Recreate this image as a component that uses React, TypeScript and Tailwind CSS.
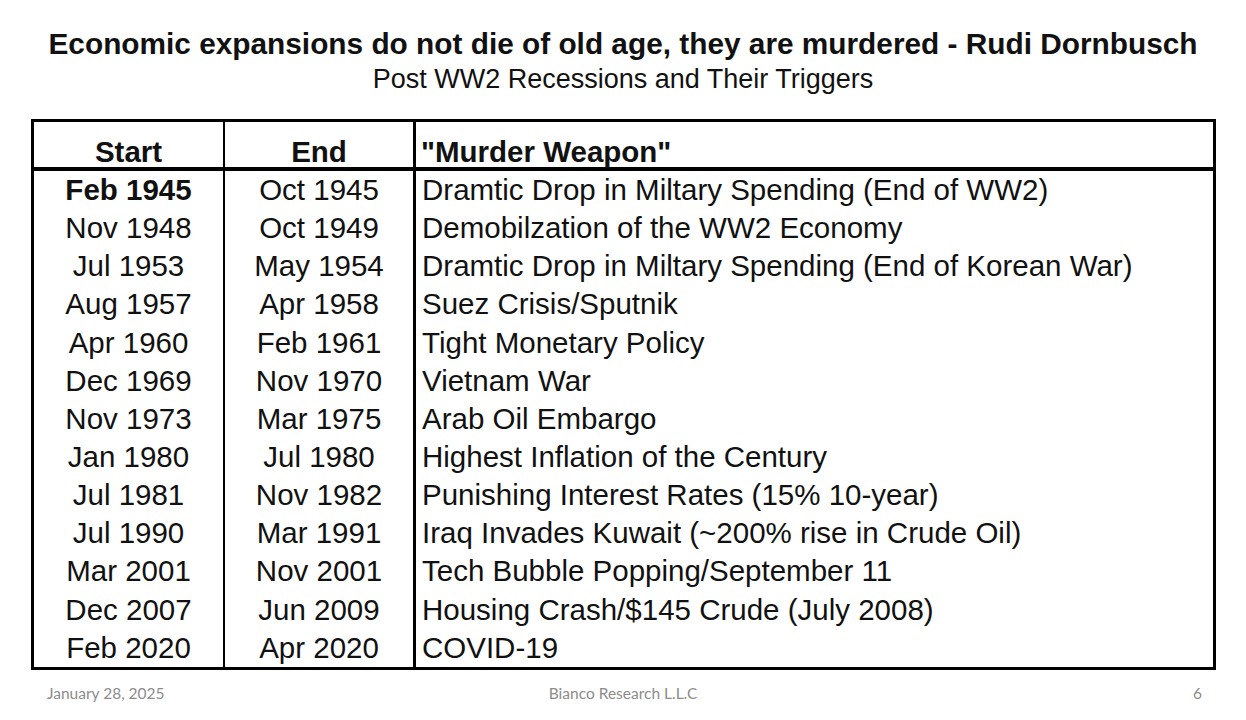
import React from 'react';

const rows: [string, string, string][] = [
  ['Feb 1945', 'Oct 1945', 'Dramtic Drop in Miltary Spending (End of WW2)'],
  ['Nov 1948', 'Oct 1949', 'Demobilzation of the WW2 Economy'],
  ['Jul 1953', 'May 1954', 'Dramtic Drop in Miltary Spending (End of Korean War)'],
  ['Aug 1957', 'Apr 1958', 'Suez Crisis/Sputnik'],
  ['Apr 1960', 'Feb 1961', 'Tight Monetary Policy'],
  ['Dec 1969', 'Nov 1970', 'Vietnam War'],
  ['Nov 1973', 'Mar 1975', 'Arab Oil Embargo'],
  ['Jan 1980', 'Jul 1980', 'Highest Inflation of the Century'],
  ['Jul 1981', 'Nov 1982', 'Punishing Interest Rates (15% 10-year)'],
  ['Jul 1990', 'Mar 1991', 'Iraq Invades Kuwait (~200% rise in Crude Oil)'],
  ['Mar 2001', 'Nov 2001', 'Tech Bubble Popping/September 11'],
  ['Dec 2007', 'Jun 2009', 'Housing Crash/$145 Crude (July 2008)'],
  ['Feb 2020', 'Apr 2020', 'COVID-19'],
];

export default function App() {
  return (
    <div className="w-[1246px] h-[720px] bg-white text-[#111] flex flex-col font-['Liberation_Sans',Arial,sans-serif]">
      <div className="pt-[26px] text-center font-bold text-[29.8px] leading-[36px]">
        Economic expansions do not die of old age, they are murdered - Rudi Dornbusch
      </div>
      <div className="text-center text-[27px] leading-[30px] mt-[2px]">Post WW2 Recessions and Their Triggers</div>

      <div className="ml-[31px] mt-[25px] w-[1185px] border-[3px] border-black">
        <div className="grid grid-cols-[191px_191px_1fr] h-[49px] border-b-[4px] border-black font-bold text-[29.5px] leading-[30px]">
          <div className="flex items-end justify-center border-r-[2px] border-black">Start</div>
          <div className="flex items-end justify-center border-r-[3px] border-black">End</div>
          <div className="flex items-end pl-[5px]">"Murder Weapon"</div>
        </div>
        {rows.map((r, i) => (
          <div key={i} className="grid grid-cols-[191px_191px_1fr] h-[38.15px] text-[29.5px] leading-[38px]">
            <div className={`text-center border-r-[2px] border-black ${i === 0 ? 'font-bold' : ''}`}>{r[0]}</div>
            <div className="text-center border-r-[3px] border-black">{r[1]}</div>
            <div className="pl-[6px] whitespace-nowrap">{r[2]}</div>
          </div>
        ))}
      </div>

      <div className="relative mt-[12px] h-[20px] text-[15.5px] text-[#8c8c8c] font-['Lato',sans-serif]">
        <span className="absolute left-[47px]">January 28, 2025</span>
        <span className="absolute left-0 right-0 text-center">Bianco Research L.L.C</span>
        <span className="absolute left-[1193px]">6</span>
      </div>
    </div>
  );
}
